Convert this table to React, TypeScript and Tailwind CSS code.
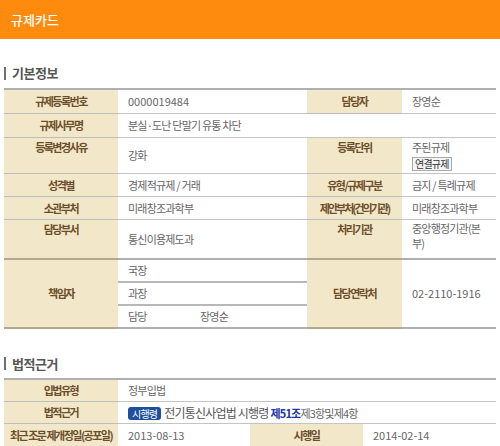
const font = { fontFamily: '"Noto Sans CJK KR", "Noto Sans", sans-serif' };

function SectionTitle({ title }: { title: string }) {
  return (
    <div className="flex items-center gap-[6px] pl-[4px]">
      <span className="h-[13px] w-[2px] bg-[#6f6f6f]" />
      <h2 className="text-[13px] font-semibold leading-[18px] tracking-[-0.5px] text-[#555]">{title}</h2>
    </div>
  );
}

const th =
  'bg-[#f3e7c9] text-center text-[11px] font-bold tracking-[-1.5px] text-[#6b4f2a] border-b border-[#bdbdbd] px-[2px]';
const td = 'text-left text-[11px] tracking-[-0.8px] text-[#666] border-b border-[#c4c4c4] pl-[10px] pr-[4px]';

export default function App() {
  return (
    <div className="w-[500px] bg-white" style={font}>
      <div className="flex h-[39px] items-center bg-[#fe8a0e] pl-[11px]">
        <h1 className="text-[13px] font-medium text-white">규제카드</h1>
      </div>

      <div className="pt-[25px]">
        <SectionTitle title="기본정보" />
      </div>

      <div className="px-[4px] pt-[6px]">
        <table className="w-full table-fixed border-collapse border-t-2 border-t-[#b0b0b0]">
          <colgroup>
            <col className="w-[114px]" />
            <col className="w-[189px]" />
            <col className="w-[95px]" />
            <col />
          </colgroup>
          <tbody>
            <tr className="h-[24px]">
              <th className={`${th} align-middle`}>규제등록번호</th>
              <td className={`${td} align-middle tracking-[0px]`}>0000019484</td>
              <th className={`${th} align-middle`}>담당자</th>
              <td className={`${td} align-middle`}>장영순</td>
            </tr>
            <tr className="h-[24px]">
              <th className={`${th} align-middle`}>규제사무명</th>
              <td className={`${td} align-middle`} colSpan={3}>
                분실·도난 단말기 유통 차단
              </td>
            </tr>
            <tr className="h-[35px]">
              <th className={`${th} align-top pt-[1px]`}>등록변경사유</th>
              <td className={`${td} align-middle`}>강화</td>
              <th className={`${th} align-top pt-[1px]`}>등록단위</th>
              <td className={`${td} align-top pt-[1px] pb-[2px]`}>
                <div className="leading-[16px]">주된규제</div>
                <span className="mt-[2px] inline-block border border-[#aaa] bg-[#f5f5f5] px-[2px] text-[10px] leading-[12px] text-[#333]">
                  연결규제
                </span>
              </td>
            </tr>
            <tr className="h-[23px]">
              <th className={`${th} align-middle`}>성격별</th>
              <td className={`${td} align-middle`}>경제적규제 / 거래</td>
              <th className={`${th} align-middle`}>유형/규제구분</th>
              <td className={`${td} align-middle`}>금지 / 특례규제</td>
            </tr>
            <tr className="h-[23px]">
              <th className={`${th} align-middle`}>소관부처</th>
              <td className={`${td} align-middle`}>미래창조과학부</td>
              <th className={`${th} align-middle tracking-[-2px]`}>제안부처(건의기관)</th>
              <td className={`${td} align-middle`}>미래창조과학부</td>
            </tr>
            <tr className="h-[39px]">
              <th className={`${th} align-top pt-[1px] border-b-2 border-b-[#b0a88f]`}>담당부서</th>
              <td className={`${td} align-middle border-b-2 border-b-[#b0b0b0]`}>통신이용제도과</td>
              <th className={`${th} align-top pt-[1px] border-b-2 border-b-[#b0a88f]`}>처리기관</th>
              <td className={`${td} align-top pt-[1px] leading-[15px] border-b-2 border-b-[#b0b0b0]`}>
                중앙행정기관(본
                <br />
                부)
              </td>
            </tr>
            <tr className="h-[23px]">
              <th className={`${th} align-middle border-b-2 border-b-[#b0a88f]`} rowSpan={3}>
                책임자
              </th>
              <td className={`${td} align-middle border-b-2 border-b-[#b8b8b8]`}>국장</td>
              <th className={`${th} align-middle border-b-2 border-b-[#b0a88f]`} rowSpan={3}>
                담당연락처
              </th>
              <td className={`${td} align-middle tracking-[0px] border-b-2 border-b-[#b0b0b0]`} rowSpan={3}>
                02-2110-1916
              </td>
            </tr>
            <tr className="h-[23px]">
              <td className={`${td} align-middle border-b-2 border-b-[#b8b8b8]`}>과장</td>
            </tr>
            <tr className="h-[23px]">
              <td className={`${td} align-middle border-b-2 border-b-[#b0b0b0]`}>
                <div className="flex">
                  <span className="w-[72px]">담당</span>
                  <span>장영순</span>
                </div>
              </td>
            </tr>
          </tbody>
        </table>
      </div>

      <div className="pt-[26px]">
        <SectionTitle title="법적근거" />
      </div>

      <div className="px-[4px] pt-[5px]">
        <table className="w-full table-fixed border-collapse border-t-2 border-t-[#b0b0b0]">
          <colgroup>
            <col className="w-[114px]" />
            <col className="w-[132px]" />
            <col className="w-[113px]" />
            <col />
          </colgroup>
          <tbody>
            <tr className="h-[23px]">
              <th className={`${th} align-middle`}>입법유형</th>
              <td className={`${td} align-middle`} colSpan={3}>
                정부입법
              </td>
            </tr>
            <tr className="h-[22px]">
              <th className={`${th} align-middle`}>법적근거</th>
              <td className={`${td} align-middle`} colSpan={3}>
                <span className="mr-[3px] inline-block rounded-[3px] bg-[#1d4f9c] px-[4px] text-[10px] leading-[13px] text-white">
                  시행령
                </span>
                <span className="text-[12px] text-[#555]">전기통신사업법 시행령 </span>
                <span className="font-bold text-[#2336a8]">제51조</span>
                <span>제3항및제4항</span>
              </td>
            </tr>
            <tr className="h-[23px]">
              <th className={`${th} align-middle border-b-2 border-b-[#b0a88f] px-0`}>
                최근 조문 제개정일(공포일)
              </th>
              <td className={`${td} align-middle tracking-[0px] border-b-2 border-b-[#b0b0b0]`}>2013-08-13</td>
              <th className={`${th} align-middle border-b-2 border-b-[#b0a88f]`}>시행일</th>
              <td className={`${td} align-middle tracking-[0px] border-b-2 border-b-[#b0b0b0]`}>2014-02-14</td>
            </tr>
          </tbody>
        </table>
      </div>
    </div>
  );
}
